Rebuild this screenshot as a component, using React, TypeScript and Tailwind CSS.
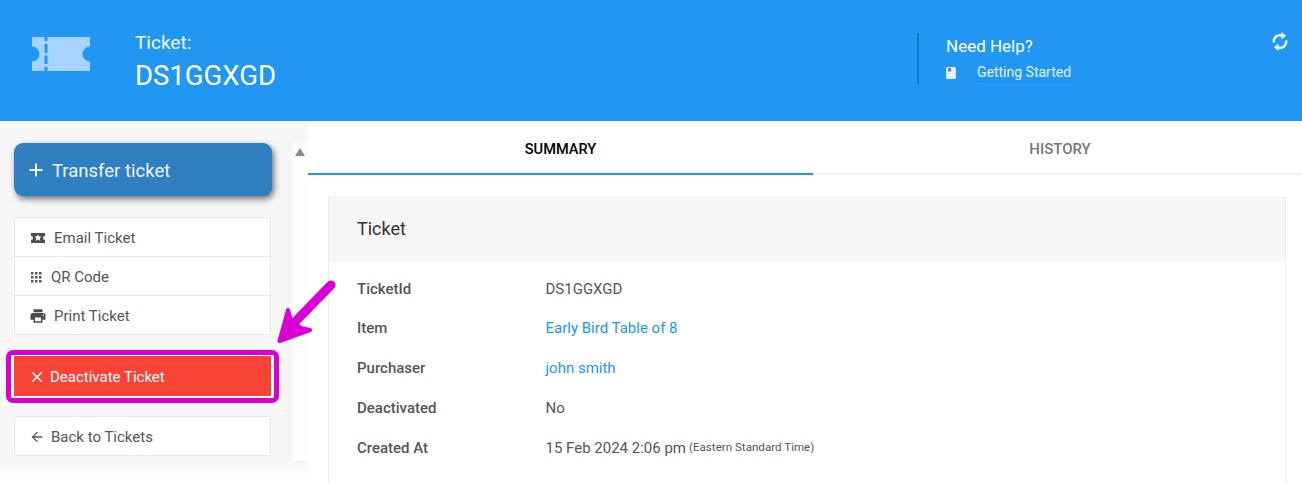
import { MdAdd, MdArrowBack, MdClose, MdPrint } from "react-icons/md";

const rows = [
  { label: "TicketId", value: "DS1GGXGD" },
  { label: "Item", value: "Early Bird Table of 8", link: true },
  { label: "Purchaser", value: "john smith", link: true },
  { label: "Deactivated", value: "No" },
];

function HeaderTicket() {
  return (
    <svg width="58" height="34" viewBox="0 0 58 34" fill="#a6d4ff">
      <path
        fillRule="evenodd"
        d="M0 0H12.5V4H15.5V0H58V9.5A7.5 7.5 0 0 0 58 24.5V34H15.5V30H12.5V34H0V24.5A7.5 7.5 0 0 0 0 9.5ZM12.5 7V16H15.5V7ZM12.5 18.5V27H15.5V18.5Z"
      />
    </svg>
  );
}

function RefreshIcon() {
  return (
    <svg width="16" height="19" viewBox="0 0 16 19" fill="none" stroke="#f2f9ff" strokeWidth="2.4">
      <path d="M2 10.5A6 6 0 0 1 10.5 3.8" />
      <path d="M14 8.5A6 6 0 0 1 5.5 15.2" />
      <path d="M9.5 0L14 3.8L9.5 7.5Z" fill="#f2f9ff" stroke="none" />
      <path d="M6.5 11.5L2 15.2L6.5 19Z" fill="#f2f9ff" stroke="none" />
    </svg>
  );
}

function StarTicket() {
  return (
    <svg width="14" height="10" viewBox="0 0 14 10" fill="#4d4d4d">
      <path
        fillRule="evenodd"
        d="M0 0H14V3A2 2 0 0 0 14 7V10H0V7A2 2 0 0 0 0 3ZM7 1.2L8.1 3.6H10.6L8.7 5.3L9.4 8L7 6.5L4.6 8L5.3 5.3L3.4 3.6H5.9Z"
      />
    </svg>
  );
}

function DotGrid() {
  const dots = [0, 4, 8].flatMap((y) => [0, 4, 8].map((x) => ({ x, y })));
  return (
    <svg width="11" height="11" viewBox="0 0 11 11" fill="#555">
      {dots.map((d) => (
        <rect key={`${d.x}-${d.y}`} x={d.x} y={d.y} width="2.5" height="2.5" />
      ))}
    </svg>
  );
}

function BookIcon() {
  return (
    <svg width="10" height="12" viewBox="0 0 10 12" fill="#e3f2fd">
      <path fillRule="evenodd" d="M1.5 0H8.5A1.5 1.5 0 0 1 10 1.5V10.5A1.5 1.5 0 0 1 8.5 12H1.5A1.5 1.5 0 0 1 0 10.5V1.5A1.5 1.5 0 0 1 1.5 0ZM2 1V5L3.5 4L5 5V1Z" />
    </svg>
  );
}

function MenuRow({ icon, text, gap, last }: { icon: React.ReactNode; text: string; gap: string; last?: boolean }) {
  return (
    <div className={`flex items-center pl-[16px] pt-[2px] text-[15px] text-[#555] ${gap} ${last ? "h-[38px]" : "h-[39px] border-b border-[#e8e8e8]"}`}>
      {icon}
      <span>{text}</span>
    </div>
  );
}

export default function App() {
  return (
    <div className="relative h-[483px] w-[1302px] overflow-hidden bg-white font-['Roboto',sans-serif]">
      <header className="flex h-[121px] bg-[#2196f3] text-white">
        <div className="ml-[32px] mt-[37px]">
          <HeaderTicket />
        </div>
        <div className="ml-[45px] mt-[31px] w-[782px]">
          <div className="text-[19px] leading-[24px] text-[#f2f9ff]">Ticket:</div>
          <div className="mt-[5px] text-[27.5px] leading-[31px]">DS1GGXGD</div>
        </div>
        <div className="mt-[33px] h-[51px] w-[2px] bg-[#1b78c4]" />
        <div className="ml-[27px] mt-[35px] w-[326px]">
          <div className="text-[17px] leading-[22px]">Need Help?</div>
          <div className="mt-[6px] flex items-center">
            <BookIcon />
            <span className="ml-[21px] border-b border-dotted border-[#1b78c4] text-[14px] leading-[18px] text-[#e3f2fd]">Getting Started</span>
          </div>
        </div>
        <div className="mt-[32px]">
          <RefreshIcon />
        </div>
      </header>

      <div className="flex h-[362px]">
        <aside className="flex h-[341px] w-[292px] shrink-0 flex-col bg-[#f7f7f7] pl-[14px] pt-[22px]">
          <button className="flex h-[53px] w-[258px] items-center gap-[5px] rounded-[9px] bg-[#2f7fc1] pl-[11px] text-[18.5px] text-[#eef6fc] shadow-[2px_3px_6px_rgba(0,0,0,0.55)]">
            <MdAdd size={22} className="text-white" />
            <span className="pt-[5px]">Transfer ticket</span>
          </button>
          <div className="mt-[21px] w-[257px] rounded-[2px] border border-[#e8e8e8] bg-white">
            <MenuRow icon={<StarTicket />} text="Email Ticket" gap="gap-[9px]" />
            <MenuRow icon={<DotGrid />} text="QR Code" gap="gap-[9px]" />
            <MenuRow icon={<MdPrint size={18} color="#4d4d4d" className="-mx-[2px]" />} text="Print Ticket" gap="gap-[9px]" last />
          </div>
          <button className="mt-[21px] flex h-[40px] w-[257px] items-center gap-[4px] bg-[#f84337] pl-[14px] pt-[2px] text-[15px] text-white">
            <MdClose size={18} />
            Deactivate Ticket
          </button>
          <div className="mt-[20px] flex h-[40px] w-[257px] items-center gap-[6px] rounded-[2px] border border-[#e8e8e8] bg-white pl-[14px] pt-[2px] text-[15px] text-[#555]">
            <MdArrowBack size={16} />
            Back to Tickets
          </div>
        </aside>

        <div className="flex h-[341px] w-[16px] shrink-0 justify-center bg-[#fdfdfd] pt-[27px]">
          <div className="h-0 w-0 border-x-[5px] border-b-[8px] border-x-transparent border-b-[#8a8a8a]" />
        </div>

        <main className="min-w-0 flex-1">
          <div className="flex h-[54px] border-b-[2px] border-[#efefef] pt-[4px]">
            <div className="-mb-[2px] flex w-[505px] items-center justify-center border-b-[2px] border-[#2196f3] pt-[1px] text-[14.6px] font-medium text-black">SUMMARY</div>
            <div className="flex flex-1 items-center justify-center pl-[5px] text-[15px] font-medium text-[#777]">HISTORY</div>
          </div>
          <section className="ml-[20px] mt-[21px] h-[300px] w-[958px] border-x border-[#ececec]">
            <div className="flex h-[66px] items-center bg-[#f6f6f6] pb-[2px] pl-[28px] text-[18px] text-[#333]">Ticket</div>
            <div className="pl-[28px] pt-[6px] text-[15px] text-[#555]">
              {rows.map((r, i) => (
                <div key={r.label} className={`flex h-[40px] items-center ${i === 0 ? "pt-[2px]" : ""}`}>
                  <span className="w-[188.5px] font-medium">{r.label}</span>
                  <span className={r.link ? "text-[#2196f3]" : ""}>{r.value}</span>
                </div>
              ))}
              <div className="flex h-[40px] items-center">
                <span className="w-[188.5px] font-medium">Created At</span>
                <span>15 Feb 2024 2:06 pm</span>
                <span className="ml-[3px] text-[11.6px]">(Eastern Standard Time)</span>
              </div>
            </div>
          </section>
        </main>
      </div>

      {/* strip above the sidebar, runs up to the tabs */}
      <div className="absolute left-[292px] top-[121px] h-[22px] w-[16px] bg-[#f7f7f7]" />

      {/* soft fade over the page bottom */}
      <div className="pointer-events-none absolute bottom-0 left-0 h-[22px] w-[308px] bg-gradient-to-b from-[#f7f7f7] to-white" />

      {/* annotation: highlight box round the deactivate button */}
      <div className="pointer-events-none absolute left-[6px] top-[350px] h-[53px] w-[273px] rounded-[7px] border-[5px] border-[#d800d4]">
        <div className="mx-0 h-full w-full rounded-[2px] border-x-[3px] border-b-[2px] border-t-[1px] border-white" />
      </div>

      {/* annotation arrow */}
      <svg className="pointer-events-none absolute left-[270px] top-[275px]" width="70" height="75" viewBox="0 0 70 75" fill="none" stroke="#d800d4" strokeLinecap="round" strokeLinejoin="round">
        <path d="M61 10L20 52" strokeWidth="9" />
        <path d="M18 35L21 45L31 53L40 55L9.5 66Z" fill="#d800d4" strokeWidth="4" />
      </svg>
    </div>
  );
}
